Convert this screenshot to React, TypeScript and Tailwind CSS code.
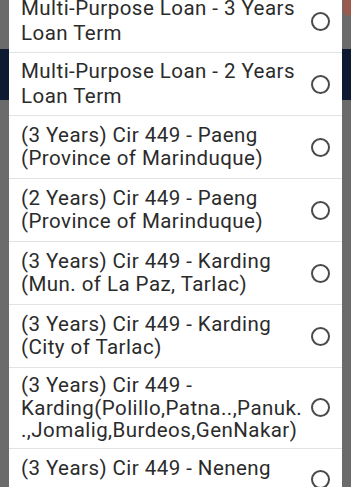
const ITEMS: string[][] = [
  ["Multi-Purpose Loan - 3 Years", "Loan Term"],
  ["Multi-Purpose Loan - 2 Years", "Loan Term"],
  ["(3 Years) Cir 449 - Paeng", "(Province of Marinduque)"],
  ["(2 Years) Cir 449 - Paeng", "(Province of Marinduque)"],
  ["(3 Years) Cir 449 - Karding", "(Mun. of La Paz, Tarlac)"],
  ["(3 Years) Cir 449 - Karding", "(City of Tarlac)"],
  ["(3 Years) Cir 449 -", "Karding(Polillo,Patna..,Panuk.", ".,Jomalig,Burdeos,GenNakar)"],
  ["(3 Years) Cir 449 - Neneng", ""],
];

function Strip({ right }: { right?: boolean }) {
  return (
    <div className="w-[9px] shrink-0 flex flex-col bg-[#6b6b6b]">
      <div className="h-[49px] relative">
        {right && <div className="absolute left-[1px] top-[-6px] w-[14px] h-[22px] rounded-full bg-[#9b5a4e]" />}
      </div>
      <div className="h-[51px] bg-[#0e1a31]" />
      <div className="flex-1" />
    </div>
  );
}

export default function App() {
  return (
    <div className="h-[487px] w-[351px] overflow-hidden flex bg-[#6b6b6b]" style={{ fontFamily: "Roboto, 'Noto Sans', sans-serif" }}>
      <Strip />
      <div className="flex-1 bg-white overflow-hidden">
        <div className="-mt-[10px]">
          {ITEMS.map((lines, i) => (
            <div key={i} className="flex items-center min-h-[63px] py-[6px] pl-[12px] pr-[12px] border-b border-[#e3e3e3]">
              <div className={`flex-1 text-[20.5px] tracking-[0.45px] text-[#2b2b2b] ${i < 2 ? "leading-[25px]" : "leading-[22.6px]"}`}>
                {lines.map((l, j) => (
                  <div key={j} className="whitespace-nowrap min-h-[1lh]">{l}</div>
                ))}
              </div>
              <div className="w-[19px] h-[19px] rounded-full border-2 border-[#4a4a4a] shrink-0" />
            </div>
          ))}
        </div>
      </div>
      <Strip right />
    </div>
  );
}
